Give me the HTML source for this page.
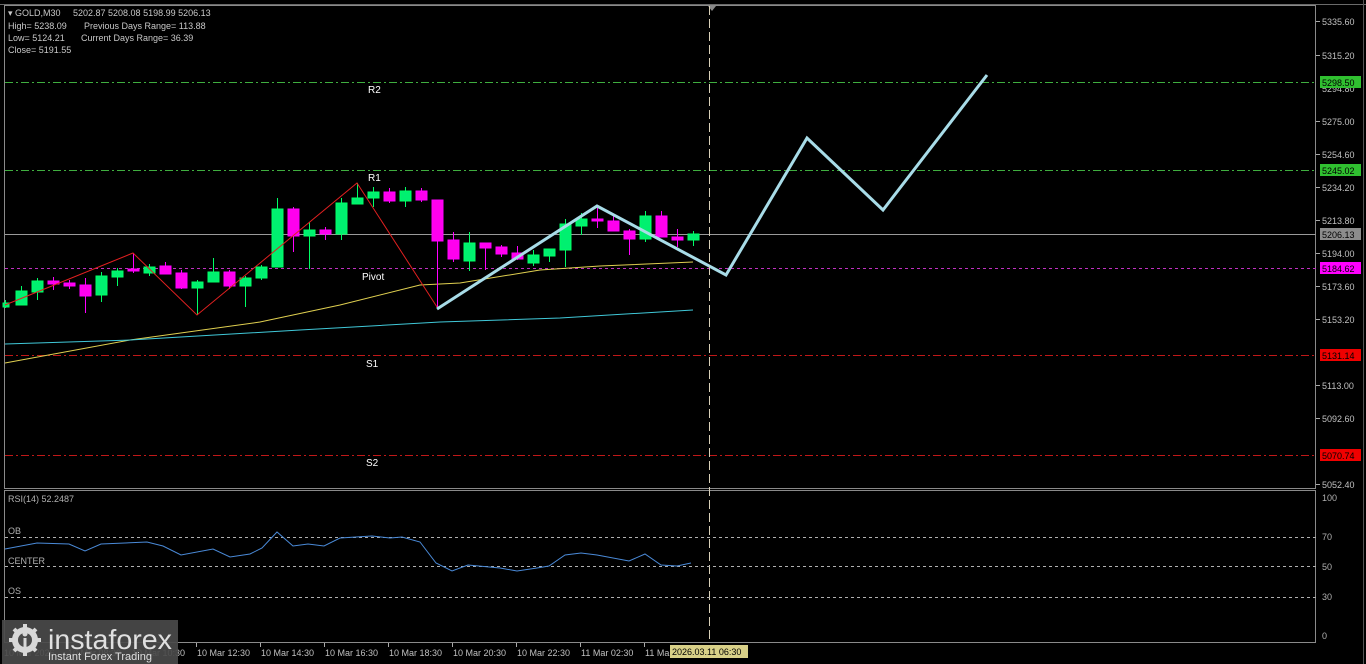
<!DOCTYPE html>
<html><head><meta charset="utf-8"><style>
html,body{margin:0;padding:0;background:#000;width:1366px;height:664px;overflow:hidden}
svg{display:block}
text{font-family:"Liberation Sans",sans-serif}
</style></head><body>
<svg width="1366" height="664" viewBox="0 0 1366 664" xmlns="http://www.w3.org/2000/svg">
<rect width="1366" height="664" fill="#000"/>
<rect x="4.5" y="5.5" width="1311" height="483" fill="none" stroke="#8a8a8a" stroke-width="1"/>
<rect x="4.5" y="490.5" width="1311" height="152" fill="none" stroke="#8a8a8a" stroke-width="1"/>
<line x1="0" y1="4.5" x2="1366" y2="4.5" stroke="#6a6a6a"/>
<line x1="1363.5" y1="0" x2="1363.5" y2="664" stroke="#555"/>
<polygon points="708,6 716,6 712,11" fill="#888"/>

<line x1="5" y1="82.5" x2="1316" y2="82.5" stroke="#3fae3f" stroke-dasharray="8,3,2,3"/>
<line x1="5" y1="170.5" x2="1316" y2="170.5" stroke="#3fae3f" stroke-dasharray="8,3,2,3"/>
<line x1="5" y1="234.5" x2="1316" y2="234.5" stroke="#9a9a9a"/>
<line x1="5" y1="268.5" x2="1316" y2="268.5" stroke="#c030c0" stroke-dasharray="3,3"/>
<line x1="5" y1="355.5" x2="1316" y2="355.5" stroke="#c01818" stroke-dasharray="8,3,2,3"/>
<line x1="5" y1="455.5" x2="1316" y2="455.5" stroke="#c01818" stroke-dasharray="8,3,2,3"/>
<g fill="#fff" font-size="10">
<text x="368" y="93">R2</text><text x="368" y="181">R1</text><text x="362" y="280">Pivot</text>
<text x="366" y="367">S1</text><text x="366" y="466">S2</text>
</g>

<polyline fill="none" stroke="#e0d050" stroke-width="1" points="5,363 130,340 260,322 340,305 420,285 460,283 540,270 600,266 693,262"/>
<polyline fill="none" stroke="#40c8d8" stroke-width="1" points="5,344 130,340 300,330 440,322 560,318 693,310"/>

<g stroke-width="1">
<g stroke="#00ff66" fill="#00f070">
<line x1="21.5" y1="286" x2="21.5" y2="305"/><rect x="16" y="291" width="11" height="14"/>
<line x1="37.5" y1="278" x2="37.5" y2="300"/><rect x="32" y="281" width="11" height="11"/>
<line x1="101.5" y1="272" x2="101.5" y2="302"/><rect x="96" y="276" width="11" height="19"/>
<line x1="117.5" y1="268" x2="117.5" y2="286"/><rect x="112" y="271" width="11" height="6"/>
<line x1="149.5" y1="264" x2="149.5" y2="276"/><rect x="144" y="267" width="11" height="6"/>
<line x1="197.5" y1="280" x2="197.5" y2="315"/><rect x="192" y="282" width="11" height="6"/>
<line x1="213.5" y1="258" x2="213.5" y2="282"/><rect x="208" y="272" width="11" height="10"/>
<line x1="245.5" y1="276" x2="245.5" y2="307"/><rect x="240" y="278" width="11" height="8"/>
<line x1="261.5" y1="265" x2="261.5" y2="280"/><rect x="256" y="267" width="11" height="11"/>
<line x1="277.5" y1="198" x2="277.5" y2="267"/><rect x="272" y="209" width="11" height="58"/>
<line x1="309.5" y1="222" x2="309.5" y2="269"/><rect x="304" y="230" width="11" height="6"/>
<line x1="341.5" y1="198" x2="341.5" y2="240"/><rect x="336" y="203" width="11" height="31"/>
<line x1="357.5" y1="183" x2="357.5" y2="204"/><rect x="352" y="198" width="11" height="6"/>
<line x1="373.5" y1="187" x2="373.5" y2="207"/><rect x="368" y="192" width="11" height="6"/>
<line x1="405.5" y1="187" x2="405.5" y2="207"/><rect x="400" y="191" width="11" height="10"/>
<line x1="469.5" y1="232" x2="469.5" y2="271"/><rect x="464" y="243" width="11" height="18"/>
<line x1="533.5" y1="250" x2="533.5" y2="266"/><rect x="528" y="255" width="11" height="8"/>
<line x1="549.5" y1="249" x2="549.5" y2="262"/><rect x="544" y="249" width="11" height="7"/>
<line x1="565.5" y1="219" x2="565.5" y2="267"/><rect x="560" y="224" width="11" height="26"/>
<line x1="581.5" y1="213" x2="581.5" y2="235"/><rect x="576" y="219" width="11" height="7"/>
<line x1="645.5" y1="211" x2="645.5" y2="242"/><rect x="640" y="216" width="11" height="23"/>
<line x1="693.5" y1="231" x2="693.5" y2="246"/><rect x="688" y="234" width="11" height="6"/>
<line x1="5.5" y1="300" x2="5.5" y2="308"/><rect x="3" y="303" width="6" height="4"/>
</g>
<g stroke="#ff00ff" fill="#ff00ee">
<line x1="53.5" y1="277" x2="53.5" y2="290"/><rect x="48" y="281" width="11" height="3"/>
<line x1="69.5" y1="280" x2="69.5" y2="289"/><rect x="64" y="283" width="11" height="3"/>
<line x1="85.5" y1="278" x2="85.5" y2="313"/><rect x="80" y="285" width="11" height="11"/>
<line x1="133.5" y1="253" x2="133.5" y2="273"/><rect x="128" y="269" width="11" height="2"/>
<line x1="165.5" y1="262" x2="165.5" y2="274"/><rect x="160" y="266" width="11" height="8"/>
<line x1="181.5" y1="270" x2="181.5" y2="289"/><rect x="176" y="273" width="11" height="15"/>
<line x1="229.5" y1="270" x2="229.5" y2="289"/><rect x="224" y="272" width="11" height="14"/>
<line x1="293.5" y1="207" x2="293.5" y2="252"/><rect x="288" y="209" width="11" height="27"/>
<line x1="325.5" y1="227" x2="325.5" y2="240"/><rect x="320" y="230" width="11" height="4"/>
<line x1="389.5" y1="188" x2="389.5" y2="203"/><rect x="384" y="192" width="11" height="9"/>
<line x1="421.5" y1="188" x2="421.5" y2="202"/><rect x="416" y="191" width="11" height="9"/>
<line x1="437.5" y1="200" x2="437.5" y2="307"/><rect x="432" y="200" width="11" height="41"/>
<line x1="453.5" y1="232" x2="453.5" y2="262"/><rect x="448" y="240" width="11" height="19"/>
<line x1="485.5" y1="243" x2="485.5" y2="270"/><rect x="480" y="243" width="11" height="5"/>
<line x1="501.5" y1="245" x2="501.5" y2="257"/><rect x="496" y="247" width="11" height="7"/>
<line x1="517.5" y1="246" x2="517.5" y2="260"/><rect x="512" y="253" width="11" height="6"/>
<line x1="597.5" y1="208" x2="597.5" y2="228"/><rect x="592" y="219" width="11" height="2"/>
<line x1="613.5" y1="216" x2="613.5" y2="231"/><rect x="608" y="221" width="11" height="10"/>
<line x1="629.5" y1="229" x2="629.5" y2="255"/><rect x="624" y="231" width="11" height="8"/>
<line x1="661.5" y1="211" x2="661.5" y2="237"/><rect x="656" y="216" width="11" height="21"/>
<line x1="677.5" y1="229" x2="677.5" y2="247"/><rect x="672" y="237" width="11" height="3"/>
</g>
</g>

<polyline fill="none" stroke="#e02020" stroke-width="1" points="5,305 133,253 197,315 357,183 437,307"/>
<polyline fill="none" stroke="#a8dce8" stroke-width="3" stroke-linejoin="miter" points="437,309 597,206 726,275 807,138 883,210 987,75"/>

<line x1="709.5" y1="6" x2="709.5" y2="643" stroke="#d8d0b8" stroke-dasharray="9,4"/>

<g fill="#c8c8c8" font-size="9">
<text x="8" y="16">▾ GOLD,M30</text><text x="73" y="16">5202.87 5208.08 5198.99 5206.13</text>
<text x="8" y="29">High= 5238.09</text><text x="84" y="29">Previous Days Range= 113.88</text>
<text x="8" y="41">Low= 5124.21</text><text x="81" y="41">Current Days Range= 36.39</text>
<text x="8" y="53">Close= 5191.55</text>
</g>

<g fill="#c0c0c0" font-size="9">
<text x="1322" y="25">5335.60</text><text x="1322" y="59">5315.20</text><text x="1322" y="92">5294.80</text>
<text x="1322" y="125">5275.00</text><text x="1322" y="158">5254.60</text><text x="1322" y="191">5234.20</text>
<text x="1322" y="224">5213.80</text><text x="1322" y="257">5194.00</text><text x="1322" y="290">5173.60</text>
<text x="1322" y="323">5153.20</text><text x="1322" y="389">5113.00</text><text x="1322" y="422">5092.60</text>
<text x="1322" y="488">5052.40</text>
</g>
<g stroke="#aaa"><line x1="1316" y1="21.5" x2="1320" y2="21.5"/><line x1="1316" y1="55.5" x2="1320" y2="55.5"/><line x1="1316" y1="121.5" x2="1320" y2="121.5"/><line x1="1316" y1="154.5" x2="1320" y2="154.5"/><line x1="1316" y1="187.5" x2="1320" y2="187.5"/><line x1="1316" y1="220.5" x2="1320" y2="220.5"/><line x1="1316" y1="253.5" x2="1320" y2="253.5"/><line x1="1316" y1="286.5" x2="1320" y2="286.5"/><line x1="1316" y1="319.5" x2="1320" y2="319.5"/><line x1="1316" y1="385.5" x2="1320" y2="385.5"/><line x1="1316" y1="418.5" x2="1320" y2="418.5"/><line x1="1316" y1="484.5" x2="1320" y2="484.5"/></g>
<g font-size="9">
<rect x="1320" y="76" width="41" height="12" fill="#30c030"/><text x="1322" y="86" fill="#000">5298.50</text>
<rect x="1320" y="164" width="41" height="12" fill="#30c030"/><text x="1322" y="174" fill="#000">5245.02</text>
<rect x="1320" y="228" width="41" height="12" fill="#8c8c8c"/><text x="1322" y="238" fill="#000">5206.13</text>
<rect x="1320" y="262" width="41" height="12" fill="#ff00ff"/><text x="1322" y="272" fill="#000">5184.62</text>
<rect x="1320" y="349" width="41" height="12" fill="#f00000"/><text x="1322" y="359" fill="#000">5131.14</text>
<rect x="1320" y="449" width="41" height="12" fill="#f00000"/><text x="1322" y="459" fill="#000">5070.74</text>
</g>

<g stroke="#b0b0b0" stroke-dasharray="3,3"><line x1="5" y1="537.5" x2="1316" y2="537.5"/><line x1="5" y1="566.5" x2="1316" y2="566.5"/><line x1="5" y1="597.5" x2="1316" y2="597.5"/></g>
<g fill="#b0b0b0" font-size="9">
<text x="8" y="502">RSI(14) 52.2487</text><text x="8" y="534">OB</text><text x="8" y="564">CENTER</text><text x="8" y="594">OS</text>
<text x="1322" y="501">100</text><text x="1322" y="540">70</text><text x="1322" y="570">50</text><text x="1322" y="600">30</text><text x="1322" y="639">0</text>
</g>
<polyline fill="none" stroke="#4a8ad8" stroke-width="1" points="5,549 37,543 69,544 85,551 101,544 147,542 163,546 181,555 213,549 230,557 250,554 262,548 277,532 293,546 308,544 324,546 340,538 372,536 390,538 402,537 420,542 436,563 452,571 468,565 500,568 517,571 537,568 549,566 565,555 581,553 597,555 629,561 645,554 661,565 677,566 691,563"/>

<g stroke="#aaa"><line x1="196.5" y1="643" x2="196.5" y2="647"/><line x1="260.5" y1="643" x2="260.5" y2="647"/><line x1="324.5" y1="643" x2="324.5" y2="647"/><line x1="388.5" y1="643" x2="388.5" y2="647"/><line x1="452.5" y1="643" x2="452.5" y2="647"/><line x1="516.5" y1="643" x2="516.5" y2="647"/><line x1="580.5" y1="643" x2="580.5" y2="647"/><line x1="644.5" y1="643" x2="644.5" y2="647"/></g>
<g fill="#c0c0c0" font-size="9">
<text x="4" y="656">10 Mar 2026</text><text x="68" y="656">10 Mar 08:30</text><text x="132" y="656">10 Mar 10:30</text>
<text x="197" y="656">10 Mar 12:30</text><text x="261" y="656">10 Mar 14:30</text><text x="325" y="656">10 Mar 16:30</text>
<text x="389" y="656">10 Mar 18:30</text><text x="453" y="656">10 Mar 20:30</text><text x="517" y="656">10 Mar 22:30</text>
<text x="581" y="656">11 Mar 02:30</text><text x="645" y="656">11 Ma</text>
</g>
<rect x="670" y="645" width="78" height="13" fill="#d8d088"/><text x="672" y="655" font-size="9" fill="#000">2026.03.11 06:30</text>

<rect x="2" y="620" width="176" height="44" fill="#4a4a4a" fill-opacity="0.92"/>
<g fill="#d8d8d8">
<circle cx="25" cy="640" r="13"/>
<g stroke="#d8d8d8" stroke-width="4"><line x1="25" y1="624" x2="25" y2="656"/><line x1="9" y1="640" x2="41" y2="640"/><line x1="14" y1="629" x2="36" y2="651"/><line x1="36" y1="629" x2="14" y2="651"/></g>
<circle cx="25" cy="640" r="7" fill="#4a4a4a"/>
<circle cx="25" cy="634" r="2.5"/>
<rect x="23.5" y="638" width="3" height="14"/>
<text x="48" y="649" font-size="28" fill="#e0e0e0" textLength="124" lengthAdjust="spacingAndGlyphs">instaforex</text>
<text x="48" y="660" font-size="11" fill="#e0e0e0">Instant Forex Trading</text>
</g>
</svg>
</body></html>
